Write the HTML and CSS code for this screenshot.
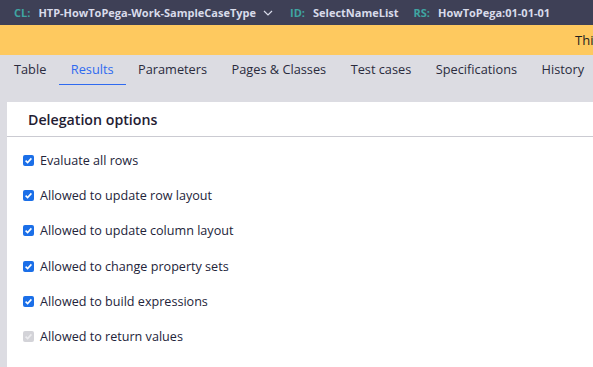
FILE: index.html
```html
<!DOCTYPE html>
<html>
<head>
<meta charset="utf-8">
<link rel="stylesheet" href="styles.css">
</head>
<body>
<div class="topbar">
  <span class="lbl">CL:</span><span class="val">HTP-HowToPega-Work-SampleCaseType</span>
  <svg class="chev" width="10" height="6" viewBox="0 0 10 6"><path d="M1 1 L5 5 L9 1" fill="none" stroke="#d8dbea" stroke-width="1.2"/></svg>
  <span class="lbl">ID:</span><span class="val">SelectNameList</span>
  <span class="lbl">RS:</span><span class="val">HowToPega:01-01-01</span>
</div>
<div class="banner"><span class="msg">This rule is checked out</span></div>
<div class="tabs">
  <div class="tab">Table</div>
  <div class="tab active">Results</div>
  <div class="tab">Parameters</div>
  <div class="tab">Pages &amp; Classes</div>
  <div class="tab">Test cases</div>
  <div class="tab">Specifications</div>
  <div class="tab">History</div>
</div>
<div class="panel">
  <div class="panel-head">Delegation options</div>
  <div class="opts">
    <div class="opt"><span class="cb"><svg viewBox="0 0 11 11"><path d="M2.6 5.6 L4.6 7.5 L8.4 3.4" fill="none" stroke="#fff" stroke-width="1.6"/></svg></span>Evaluate all rows</div>
    <div class="opt"><span class="cb"><svg viewBox="0 0 11 11"><path d="M2.6 5.6 L4.6 7.5 L8.4 3.4" fill="none" stroke="#fff" stroke-width="1.6"/></svg></span>Allowed to update row layout</div>
    <div class="opt"><span class="cb"><svg viewBox="0 0 11 11"><path d="M2.6 5.6 L4.6 7.5 L8.4 3.4" fill="none" stroke="#fff" stroke-width="1.6"/></svg></span>Allowed to update column layout</div>
    <div class="opt"><span class="cb"><svg viewBox="0 0 11 11"><path d="M2.6 5.6 L4.6 7.5 L8.4 3.4" fill="none" stroke="#fff" stroke-width="1.6"/></svg></span>Allowed to change property sets</div>
    <div class="opt"><span class="cb"><svg viewBox="0 0 11 11"><path d="M2.6 5.6 L4.6 7.5 L8.4 3.4" fill="none" stroke="#fff" stroke-width="1.6"/></svg></span>Allowed to build expressions</div>
    <div class="opt"><span class="cb disabled"><svg viewBox="0 0 11 11"><path d="M2.6 5.6 L4.6 7.5 L8.4 3.4" fill="none" stroke="#ececef" stroke-width="1.6"/></svg></span>Allowed to return values</div>
  </div>
</div>
</body>
</html>
```

FILE: styles.css
```css
html, body {
  margin: 0;
  padding: 0;
  height: 100%;
  overflow: hidden;
}
body {
  background: #dcdce2;
  font-family: "Open Sans", "DejaVu Sans", sans-serif;
  color: #1f2033;
  display: flex;
  flex-direction: column;
}
.topbar {
  height: 25px;
  flex: none;
  background: #3e4056;
  display: flex;
  align-items: center;
  padding-left: 14px;
  font-size: 11px;
  font-weight: 700;
  white-space: nowrap;
}
.lbl {
  color: #3fa5a2;
  margin-right: 8px;
}
.val {
  color: #d8dbea;
  margin-right: 15px;
}
.chev {
  margin-left: -8px;
  margin-right: 17px;
}
.banner {
  height: 30px;
  flex: none;
  background: #fec95f;
  display: flex;
  align-items: center;
  padding-left: 575px;
  overflow: hidden;
  white-space: nowrap;
  font-size: 13px;
  color: #1f1f1f;
}
.tabs {
  height: 47px;
  flex: none;
  display: flex;
  align-items: flex-start;
  padding-left: 1px;
  font-size: 12.75px;
  color: #2a2b3d;
}
.tab {
  padding: 6px 12.25px 0;
  height: 23px;
  line-height: 17px;
  white-space: nowrap;
}
.tab:first-child {
  padding-left: 13px;
}
.tab.active {
  color: #2f6af0;
  border-bottom: 1px solid #2f6af0;
}
.panel {
  flex: 1;
  margin-left: 7px;
  background: #fff;
}
.panel-head {
  height: 35px;
  box-sizing: border-box;
  border-bottom: 1px solid #cbcbd2;
  display: flex;
  align-items: center;
  padding-left: 21px;
  font-size: 14.2px;
  font-weight: 600;
  color: #1f2033;
}
.opts {
  padding-top: 6px;
}
.opt {
  height: 35.2px;
  display: flex;
  align-items: center;
  padding-left: 16px;
  font-size: 12.6px;
  color: #23243a;
}
.cb {
  width: 11px;
  height: 11px;
  border-radius: 2px;
  background: #1b6fe8;
  margin-right: 6px;
  display: flex;
}
.cb svg {
  width: 11px;
  height: 11px;
}
.cb.disabled {
  background: #d3d3d8;
}
```
